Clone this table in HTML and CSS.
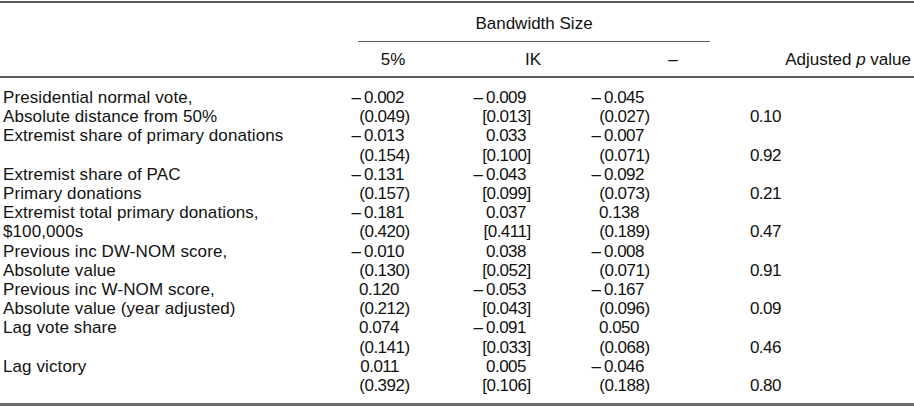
FILE: index.html
```html
<!DOCTYPE html>
<html lang="en">
<head>
<meta charset="utf-8">
<title>Bandwidth table</title>
<link rel="stylesheet" href="styles.css">
</head>
<body>
<div class="table">
  <div class="rule rule-top"></div>
  <div class="spanner"><div class="spanner-label">Bandwidth Size</div></div>
  <div class="head-row">
    <span class="h">5%</span>
    <span class="h">IK</span>
    <span class="h">–</span>
    <span class="h h-last">Adjusted <i>p</i> value</span>
  </div>
  <div class="rule rule-mid"></div>
  <div class="body">
    <div class="row"><span class="lbl">Presidential normal vote,</span><span class="n"><span class="m">–</span>0.002</span><span class="n"><span class="m">–</span>0.009</span><span class="n"><span class="m">–</span>0.045</span><span class="n"></span></div>
    <div class="row"><span class="lbl">Absolute distance from 50%</span><span class="n">(0.049<span class="cl">)</span></span><span class="n">[0.013<span class="cb">]</span></span><span class="n">(0.027<span class="cl">)</span></span><span class="n">0.10</span></div>
    <div class="row"><span class="lbl">Extremist share of primary donations</span><span class="n"><span class="m">–</span>0.013</span><span class="n">0.033</span><span class="n"><span class="m">–</span>0.007</span><span class="n"></span></div>
    <div class="row"><span class="lbl"></span><span class="n">(0.154<span class="cl">)</span></span><span class="n">[0.100<span class="cb">]</span></span><span class="n">(0.071<span class="cl">)</span></span><span class="n">0.92</span></div>
    <div class="row"><span class="lbl">Extremist share of PAC</span><span class="n"><span class="m">–</span>0.131</span><span class="n"><span class="m">–</span>0.043</span><span class="n"><span class="m">–</span>0.092</span><span class="n"></span></div>
    <div class="row"><span class="lbl">Primary donations</span><span class="n">(0.157<span class="cl">)</span></span><span class="n">[0.099<span class="cb">]</span></span><span class="n">(0.073<span class="cl">)</span></span><span class="n">0.21</span></div>
    <div class="row"><span class="lbl">Extremist total primary donations,</span><span class="n"><span class="m">–</span>0.181</span><span class="n">0.037</span><span class="n pc">0.138</span><span class="n"></span></div>
    <div class="row"><span class="lbl">$100,000s</span><span class="n">(0.420<span class="cl">)</span></span><span class="n">[0.411<span class="cb">]</span></span><span class="n">(0.189<span class="cl">)</span></span><span class="n">0.47</span></div>
    <div class="row"><span class="lbl">Previous inc DW-NOM score,</span><span class="n"><span class="m">–</span>0.010</span><span class="n">0.038</span><span class="n"><span class="m">–</span>0.008</span><span class="n"></span></div>
    <div class="row"><span class="lbl">Absolute value</span><span class="n">(0.130<span class="cl">)</span></span><span class="n">[0.052<span class="cb">]</span></span><span class="n">(0.071<span class="cl">)</span></span><span class="n">0.91</span></div>
    <div class="row"><span class="lbl">Previous inc W-NOM score,</span><span class="n pc">0.120</span><span class="n"><span class="m">–</span>0.053</span><span class="n"><span class="m">–</span>0.167</span><span class="n"></span></div>
    <div class="row"><span class="lbl">Absolute value (year adjusted)</span><span class="n">(0.212<span class="cl">)</span></span><span class="n">[0.043<span class="cb">]</span></span><span class="n">(0.096<span class="cl">)</span></span><span class="n">0.09</span></div>
    <div class="row"><span class="lbl">Lag vote share</span><span class="n pc">0.074</span><span class="n"><span class="m">–</span>0.091</span><span class="n pc">0.050</span><span class="n"></span></div>
    <div class="row"><span class="lbl"></span><span class="n">(0.141<span class="cl">)</span></span><span class="n">[0.033<span class="cb">]</span></span><span class="n">(0.068<span class="cl">)</span></span><span class="n">0.46</span></div>
    <div class="row"><span class="lbl">Lag victory</span><span class="n pc">0.011</span><span class="n">0.005</span><span class="n"><span class="m">–</span>0.046</span><span class="n"></span></div>
    <div class="row"><span class="lbl"></span><span class="n">(0.392<span class="cl">)</span></span><span class="n">[0.106<span class="cb">]</span></span><span class="n">(0.188<span class="cl">)</span></span><span class="n">0.80</span></div>
  </div>
  <div class="rule rule-bottom"></div>
</div>
</body>
</html>
```

FILE: styles.css
```css
html, body {
  margin: 0;
  padding: 0;
  background: #ffffff;
}

body {
  font-family: "Liberation Sans", Arial, Helvetica, sans-serif;
  font-size: 17px;
  color: #111111;
}

.table {
  width: 914px;
  padding-top: 1px;
}

.rule {
  background: #5a5a5a;
}

.rule-top {
  height: 2px;
}

.rule-mid {
  height: 2px;
}

.rule-bottom {
  height: 3px;
  background: #6e6e6e;
}

.spanner {
  padding-left: 358px;
}

.spanner-label {
  width: 352px;
  text-align: center;
  line-height: 19.2px;
  padding-top: 11px;
  padding-bottom: 7.5px;
  border-bottom: 1px solid #5a5a5a;
}

.head-row {
  display: grid;
  grid-template-columns: 323px 140px 140px 140px 1fr;
  line-height: 19.2px;
  padding-top: 8.4px;
  padding-bottom: 6.4px;
}

.head-row .h {
  text-align: center;
}

.head-row .h:first-child {
  grid-column: 2;
}

.head-row .h-last {
  text-align: right;
  padding-right: 3px;
}

.body {
  padding-top: 10.4px;
  padding-bottom: 8.4px;
}

.row {
  display: grid;
  grid-template-columns: 300px 104px 122px 118px 137px;
  line-height: 19.2px;
  height: 19.2px;
}

.lbl {
  padding-left: 3px;
  white-space: nowrap;
  letter-spacing: 0.1px;
}

.n {
  text-align: right;
  white-space: nowrap;
  letter-spacing: -0.5px;
}

.n .m {
  letter-spacing: 0;
  margin-right: 3px;
}

.n.pc {
  padding-right: 5px;
}

.cl {
  margin-right: -0.333em;
}

.cb {
  margin-right: -0.278em;
}
```
